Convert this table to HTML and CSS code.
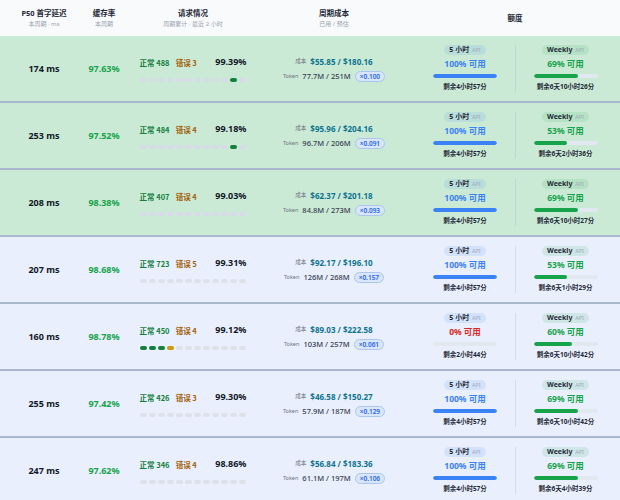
FILE: index.html
```html
<!DOCTYPE html>
<html lang="zh">
<head>
<meta charset="utf-8">
<link rel="stylesheet" href="styles.css">
</head>
<body>
<div class="table">
  <div class="head">
    <div class="hc"><div class="ht">P50 首字延迟</div><div class="hs">本周期 · ms</div></div>
    <div class="hc"><div class="ht">缓存率</div><div class="hs">本周期</div></div>
    <div class="hc"><div class="ht">请求情况</div><div class="hs">周期累计 · 最近 2 小时</div></div>
    <div class="hc"><div class="ht">周期成本</div><div class="hs">已用 / 预估</div></div>
    <div class="hc quota-h"><div class="ht">额度</div></div>
  </div>

  <div class="row good">
    <div class="lat">174 ms</div>
    <div class="cache">97.63%</div>
    <div class="req">
      <div class="req-top"><span><span class="ok">正常 488</span> <span class="err">错误 3</span></span><span class="rate">99.39%</span></div>
      <div class="dots"><i></i><i></i><i></i><i></i><i></i><i></i><i></i><i></i><i></i><i></i><i class="g"></i><i></i></div>
    </div>
    <div class="cost">
      <div class="c1"><span class="lbl">成本</span><span class="amt">$55.85 / $180.16</span></div>
      <div class="c2"><span class="lbl">Token</span><span class="tok">77.7M / 251M</span><span class="mult">×0.100</span></div>
    </div>
    <div class="quota">
      <div class="q"><div class="pill p5">5 小时 <em>API</em></div><div class="pct blue">100% 可用</div><div class="bar"><b class="bb" style="width:100%"></b></div><div class="rem">剩余4小时57分</div></div>
      <div class="q qw"><div class="pill pw">Weekly <em>API</em></div><div class="pct green">69% 可用</div><div class="bar"><b class="bg" style="width:69%"></b></div><div class="rem">剩余6天10小时26分</div></div>
    </div>
  </div>

  <div class="row good">
    <div class="lat">253 ms</div>
    <div class="cache">97.52%</div>
    <div class="req">
      <div class="req-top"><span><span class="ok">正常 484</span> <span class="err">错误 4</span></span><span class="rate">99.18%</span></div>
      <div class="dots"><i></i><i></i><i></i><i></i><i></i><i></i><i></i><i></i><i></i><i></i><i class="g"></i><i></i></div>
    </div>
    <div class="cost">
      <div class="c1"><span class="lbl">成本</span><span class="amt">$95.96 / $204.16</span></div>
      <div class="c2"><span class="lbl">Token</span><span class="tok">96.7M / 206M</span><span class="mult">×0.091</span></div>
    </div>
    <div class="quota">
      <div class="q"><div class="pill p5">5 小时 <em>API</em></div><div class="pct blue">100% 可用</div><div class="bar"><b class="bb" style="width:100%"></b></div><div class="rem">剩余4小时57分</div></div>
      <div class="q qw"><div class="pill pw">Weekly <em>API</em></div><div class="pct green">53% 可用</div><div class="bar"><b class="bg" style="width:53%"></b></div><div class="rem">剩余6天2小时36分</div></div>
    </div>
  </div>

  <div class="row good">
    <div class="lat">208 ms</div>
    <div class="cache">98.38%</div>
    <div class="req">
      <div class="req-top"><span><span class="ok">正常 407</span> <span class="err">错误 4</span></span><span class="rate">99.03%</span></div>
      <div class="dots"><i></i><i></i><i></i><i></i><i></i><i></i><i></i><i></i><i></i><i></i><i></i><i></i></div>
    </div>
    <div class="cost">
      <div class="c1"><span class="lbl">成本</span><span class="amt">$62.37 / $201.18</span></div>
      <div class="c2"><span class="lbl">Token</span><span class="tok">84.8M / 273M</span><span class="mult">×0.093</span></div>
    </div>
    <div class="quota">
      <div class="q"><div class="pill p5">5 小时 <em>API</em></div><div class="pct blue">100% 可用</div><div class="bar"><b class="bb" style="width:100%"></b></div><div class="rem">剩余4小时57分</div></div>
      <div class="q qw"><div class="pill pw">Weekly <em>API</em></div><div class="pct green">69% 可用</div><div class="bar"><b class="bg" style="width:69%"></b></div><div class="rem">剩余6天10小时27分</div></div>
    </div>
  </div>

  <div class="row">
    <div class="lat">207 ms</div>
    <div class="cache">98.68%</div>
    <div class="req">
      <div class="req-top"><span><span class="ok">正常 723</span> <span class="err">错误 5</span></span><span class="rate">99.31%</span></div>
      <div class="dots"><i></i><i></i><i></i><i></i><i></i><i></i><i></i><i></i><i></i><i></i><i></i><i></i></div>
    </div>
    <div class="cost">
      <div class="c1"><span class="lbl">成本</span><span class="amt">$92.17 / $196.10</span></div>
      <div class="c2"><span class="lbl">Token</span><span class="tok">126M / 268M</span><span class="mult">×0.157</span></div>
    </div>
    <div class="quota">
      <div class="q"><div class="pill p5">5 小时 <em>API</em></div><div class="pct blue">100% 可用</div><div class="bar"><b class="bb" style="width:100%"></b></div><div class="rem">剩余4小时57分</div></div>
      <div class="q qw"><div class="pill pw">Weekly <em>API</em></div><div class="pct green">53% 可用</div><div class="bar"><b class="bg" style="width:53%"></b></div><div class="rem">剩余6天1小时29分</div></div>
    </div>
  </div>

  <div class="row">
    <div class="lat">160 ms</div>
    <div class="cache">98.78%</div>
    <div class="req">
      <div class="req-top"><span><span class="ok">正常 450</span> <span class="err">错误 4</span></span><span class="rate">99.12%</span></div>
      <div class="dots"><i class="g"></i><i class="g"></i><i class="g"></i><i class="y"></i><i></i><i></i><i></i><i></i><i></i><i></i><i></i><i></i></div>
    </div>
    <div class="cost">
      <div class="c1"><span class="lbl">成本</span><span class="amt">$89.03 / $222.58</span></div>
      <div class="c2"><span class="lbl">Token</span><span class="tok">103M / 257M</span><span class="mult">×0.061</span></div>
    </div>
    <div class="quota">
      <div class="q"><div class="pill p5">5 小时 <em>API</em></div><div class="pct red">0% 可用</div><div class="bar"><b class="bb" style="width:0%"></b></div><div class="rem">剩余2小时44分</div></div>
      <div class="q qw"><div class="pill pw">Weekly <em>API</em></div><div class="pct green">60% 可用</div><div class="bar"><b class="bg" style="width:60%"></b></div><div class="rem">剩余6天10小时42分</div></div>
    </div>
  </div>

  <div class="row">
    <div class="lat">255 ms</div>
    <div class="cache">97.42%</div>
    <div class="req">
      <div class="req-top"><span><span class="ok">正常 426</span> <span class="err">错误 3</span></span><span class="rate">99.30%</span></div>
      <div class="dots"><i></i><i></i><i></i><i></i><i></i><i></i><i></i><i></i><i></i><i></i><i></i><i></i></div>
    </div>
    <div class="cost">
      <div class="c1"><span class="lbl">成本</span><span class="amt">$46.58 / $150.27</span></div>
      <div class="c2"><span class="lbl">Token</span><span class="tok">57.9M / 187M</span><span class="mult">×0.129</span></div>
    </div>
    <div class="quota">
      <div class="q"><div class="pill p5">5 小时 <em>API</em></div><div class="pct blue">100% 可用</div><div class="bar"><b class="bb" style="width:100%"></b></div><div class="rem">剩余4小时57分</div></div>
      <div class="q qw"><div class="pill pw">Weekly <em>API</em></div><div class="pct green">69% 可用</div><div class="bar"><b class="bg" style="width:69%"></b></div><div class="rem">剩余6天10小时42分</div></div>
    </div>
  </div>

  <div class="row">
    <div class="lat">247 ms</div>
    <div class="cache">97.62%</div>
    <div class="req">
      <div class="req-top"><span><span class="ok">正常 346</span> <span class="err">错误 4</span></span><span class="rate">98.86%</span></div>
      <div class="dots"><i></i><i></i><i></i><i></i><i></i><i></i><i></i><i></i><i></i><i></i><i></i><i></i></div>
    </div>
    <div class="cost">
      <div class="c1"><span class="lbl">成本</span><span class="amt">$56.84 / $183.36</span></div>
      <div class="c2"><span class="lbl">Token</span><span class="tok">61.1M / 197M</span><span class="mult">×0.106</span></div>
    </div>
    <div class="quota">
      <div class="q"><div class="pill p5">5 小时 <em>API</em></div><div class="pct blue">100% 可用</div><div class="bar"><b class="bb" style="width:100%"></b></div><div class="rem">剩余4小时57分</div></div>
      <div class="q qw"><div class="pill pw">Weekly <em>API</em></div><div class="pct green">69% 可用</div><div class="bar"><b class="bg" style="width:69%"></b></div><div class="rem">剩余6天4小时39分</div></div>
    </div>
  </div>
</div>
</body>
</html>
```

FILE: styles.css
```css
* { box-sizing: border-box; margin: 0; padding: 0; }
html, body { background: #e9effc; }
body {
  margin: 0;
  font-family: "Noto Sans", "Noto Sans CJK SC", sans-serif;
  color: #111827;
  overflow: hidden;
}
.table { width: 620px; }
.head, .row {
  display: grid;
  grid-template-columns: 88px 32px 146px 136px 218px;
  align-items: center;
}
.head {
  height: 36px;
  background: #f8fafc;
}
.hc {
  display: flex;
  flex-direction: column;
  align-items: center;
  white-space: nowrap;
}
.ht {
  font-size: 7.5px;
  line-height: 10px;
  font-weight: 700;
  color: #1f2937;
}
.hs {
  font-size: 6px;
  line-height: 8px;
  margin-top: 2px;
  color: #9ca3af;
}
.quota-h { padding-left: 13px; padding-right: 5px; }

.row {
  height: 67px;
  border-bottom: 2px solid #a9b7cf;
  background: #e9effc;
}
.row.good { background: #cbead6; }

.lat, .cache {
  text-align: center;
  font-size: 9px;
  font-weight: 700;
  white-space: nowrap;
}
.cache { color: #16a34a; }

.req {
  display: flex;
  flex-direction: column;
  align-items: center;
}
.req-top {
  width: 107px;
  display: flex;
  justify-content: space-between;
  align-items: center;
  line-height: 10px;
  white-space: nowrap;
}
.ok { font-size: 7.5px; font-weight: 700; color: #15803d; }
.err { font-size: 7.5px; font-weight: 700; color: #a16207; margin-left: 2px; }
.ok, .err { font-family: "Noto Sans CJK SC", sans-serif; }
.rate { font-size: 9px; font-weight: 700; color: #111827; }
.dots {
  display: flex;
  gap: 2px;
  margin-top: 10px;
}
.dots i {
  display: block;
  width: 7px;
  height: 4px;
  border-radius: 2px;
  background: #dce1ea;
}
.good .dots i { background: #d8dbe7; }
.dots i.g, .good .dots i.g { background: #15803d; }
.dots i.y { background: #ca9a12; }

.cost {
  display: flex;
  flex-direction: column;
  align-items: center;
  white-space: nowrap;
}
.c1, .c2 {
  display: flex;
  align-items: center;
}
.c1 { height: 11px; }
.c2 { height: 11px; margin-top: 4px; }
.lbl { font-size: 5.5px; color: #6b7280; margin-right: 4px; }
.amt { font-size: 8px; font-weight: 700; color: #0e7490; }
.tok { font-size: 7.5px; font-weight: 500; color: #374151; }
.mult {
  margin-left: 4px;
  height: 11px;
  padding: 0 4px;
  border-radius: 6px;
  border: 1px solid #a9c6f0;
  background: #d9e6fa;
  color: #2563eb;
  font-size: 6.5px;
  font-weight: 600;
  line-height: 9px;
}

.quota {
  display: grid;
  grid-template-columns: 100px 100px;
  padding-left: 13px;
  padding-right: 5px;
}
.q {
  display: flex;
  flex-direction: column;
  align-items: center;
  white-space: nowrap;
}
.qw { border-left: 1px solid rgba(148, 163, 184, 0.25); }
.pill {
  height: 10px;
  padding: 0 5px;
  border-radius: 5px;
  font-size: 7px;
  font-weight: 700;
  line-height: 10px;
  color: #1f2937;
}
.pill em {
  font-style: normal;
  font-weight: 400;
  font-size: 5.5px;
  color: #a0a9b8;
  margin-left: 1px;
}
.p5 { background: rgba(59, 130, 246, 0.12); }
.pw { background: rgba(22, 163, 74, 0.12); }
.pct {
  margin-top: 2px;
  font-size: 8.5px;
  font-weight: 700;
  line-height: 13px;
}
.blue { color: #3b82f6; }
.green { color: #16a34a; }
.red { color: #dc2626; }
.bar {
  margin-top: 4px;
  width: 64px;
  height: 4px;
  border-radius: 2px;
  background: #e2e8f0;
  overflow: hidden;
}
.bar b { display: block; height: 100%; border-radius: 2px; }
.bb { background: #3b82f6; }
.bg { background: #16a34a; }
.rem {
  margin-top: 4px;
  font-size: 6.5px;
  line-height: 10px;
  font-weight: 700;
  color: #1f2937;
}
```
